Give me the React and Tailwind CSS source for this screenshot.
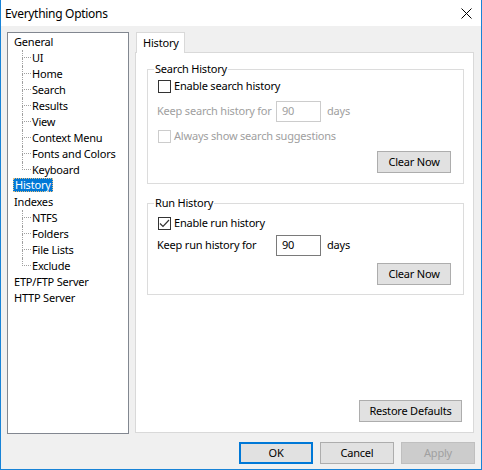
import React from "react";

const font = "font-['Noto_Sans','Liberation_Sans',sans-serif]";

function TreeRoot({ label, selected }) {
  return (
    <div className="flex h-[16px] items-start pl-[5px]">
      {selected ? (
        <span className="h-[14px] leading-[12px] px-[1px] bg-[#0078d7] text-white border border-dotted border-[#e8c080] whitespace-nowrap">
          {label}
        </span>
      ) : (
        <span className="leading-[16px] px-[1px] whitespace-nowrap">{label}</span>
      )}
    </div>
  );
}

function TreeChild({ label, last }) {
  return (
    <div className="flex h-[16px] items-stretch pl-[14px]">
      <div className="w-[9px] flex flex-col shrink-0">
        <div className="h-[8px] border-l border-b border-dotted border-[#a0a0a0]" />
        <div className={"h-[8px] " + (last ? "" : "border-l border-dotted border-[#a0a0a0]")} />
      </div>
      <span className="leading-[16px] pl-[1px] whitespace-nowrap">{label}</span>
    </div>
  );
}

function Checkbox({ checked, disabled }) {
  return (
    <div
      className={
        "w-[13px] h-[13px] border bg-white flex items-center justify-center shrink-0 " +
        (disabled ? "border-[#cccccc]" : "border-[#333333]")
      }
    >
      {checked && (
        <svg width="11" height="11" viewBox="0 0 11 11">
          <path d="M1 5.5 L4 8.5 L10 2" fill="none" stroke="#333" strokeWidth="1.2" />
        </svg>
      )}
    </div>
  );
}

function Button({ children, className = "" }) {
  return (
    <div
      className={
        "h-[22px] flex items-center justify-center bg-[#e1e1e1] border border-[#adadad] whitespace-nowrap " +
        className
      }
    >
      {children}
    </div>
  );
}

export default function App() {
  return (
    <div
      className={
        font +
        " text-[11px] tracking-[-0.2px] text-black w-[482px] h-[470px] bg-[#f0f0f0] border-l border-r border-b border-[#1883d7] flex flex-col"
      }
    >
      {/* title bar */}
      <div className="h-[26px] bg-white flex items-center justify-between shrink-0">
        <span className="pl-[4px] text-[12px] leading-[16px] tracking-[-0.3px] mt-[1px]">Everything Options</span>
        <svg width="11" height="11" viewBox="0 0 11 11" className="mr-[9px]">
          <path d="M0.5 0.5 L10.5 10.5 M10.5 0.5 L0.5 10.5" stroke="#000" strokeWidth="1" />
        </svg>
      </div>

      {/* body */}
      <div className="flex pt-[6px] pl-[6px] pr-[7px]">
        {/* tree */}
        <div className="w-[122px] h-[402px] border border-[#828790] bg-white pt-[1px] shrink-0">
          <TreeRoot label="General" />
          <TreeChild label="UI" />
          <TreeChild label="Home" />
          <TreeChild label="Search" />
          <TreeChild label="Results" />
          <TreeChild label="View" />
          <TreeChild label="Context Menu" />
          <TreeChild label="Fonts and Colors" />
          <TreeChild label="Keyboard" last />
          <TreeRoot label="History" selected />
          <TreeRoot label="Indexes" />
          <TreeChild label="NTFS" />
          <TreeChild label="Folders" />
          <TreeChild label="File Lists" />
          <TreeChild label="Exclude" last />
          <TreeRoot label="ETP/FTP Server" />
          <TreeRoot label="HTTP Server" />
        </div>

        {/* right column */}
        <div className="ml-[6px] w-[339px] flex flex-col">
          <div className="ml-[1px] w-[49px] h-[21px] border border-b-0 border-[#d9d9d9] bg-white -mb-[1px] relative z-10 flex items-center pl-[6px]">
            History
          </div>
          <div className="h-[381px] border border-[#d9d9d9] bg-white flex flex-col pl-[11px]">
            {/* Search History */}
            <fieldset className="mt-[8px] w-[317px] border border-[#dcdcdc] pb-[10px] flex flex-col">
              <legend className="ml-[6px] px-[1px] leading-[16px]">Search History</legend>
              <div className="mt-[2px] h-[15px] flex items-center ml-[10px]">
                <Checkbox />
                <span className="ml-[3px] whitespace-nowrap">Enable search history</span>
              </div>
              <div className="mt-[7px] h-[21px] flex items-center ml-[9px] text-[#a0a0a0]">
                <span className="w-[119px] whitespace-nowrap">Keep search history for</span>
                <div className="w-[45px] h-[21px] border border-[#cccccc] flex items-center pl-[5px]">90</div>
                <span className="ml-[6px]">days</span>
              </div>
              <div className="mt-[7px] h-[15px] flex items-center ml-[10px] text-[#a0a0a0]">
                <Checkbox disabled />
                <span className="ml-[3px] whitespace-nowrap">Always show search suggestions</span>
              </div>
              <div className="mt-[7px] flex justify-end mr-[12px]">
                <Button className="w-[74px]">Clear Now</Button>
              </div>
            </fieldset>

            {/* Run History */}
            <fieldset className="mt-[11px] w-[317px] border border-[#dcdcdc] pb-[9px] flex flex-col">
              <legend className="ml-[6px] px-[1px] leading-[16px]">Run History</legend>
              <div className="mt-[5px] h-[15px] flex items-center ml-[10px]">
                <Checkbox checked />
                <span className="ml-[3px] whitespace-nowrap">Enable run history</span>
              </div>
              <div className="mt-[4px] h-[21px] flex items-center ml-[9px]">
                <span className="w-[119px] whitespace-nowrap">Keep run history for</span>
                <div className="w-[45px] h-[21px] border border-[#7a7a7a] flex items-center pl-[5px]">90</div>
                <span className="ml-[6px]">days</span>
              </div>
              <div className="mt-[7px] flex justify-end mr-[12px]">
                <Button className="w-[74px]">Clear Now</Button>
              </div>
            </fieldset>

            <div className="mt-auto mb-[10px] flex justify-end mr-[11px]">
              <Button className="w-[103px]">Restore Defaults</Button>
            </div>
          </div>
        </div>
      </div>

      {/* bottom buttons */}
      <div className="mt-[8px] flex justify-end gap-[7px] pr-[6px]">
        <div className="w-[74px] h-[22px] flex items-center justify-center bg-[#e1e1e1] border-2 border-[#0078d7]">
          OK
        </div>
        <Button className="w-[74px]">Cancel</Button>
        <div className="w-[74px] h-[22px] flex items-center justify-center bg-[#cccccc] border border-[#bfbfbf] text-[#a0a0a0]">
          Apply
        </div>
      </div>
    </div>
  );
}
